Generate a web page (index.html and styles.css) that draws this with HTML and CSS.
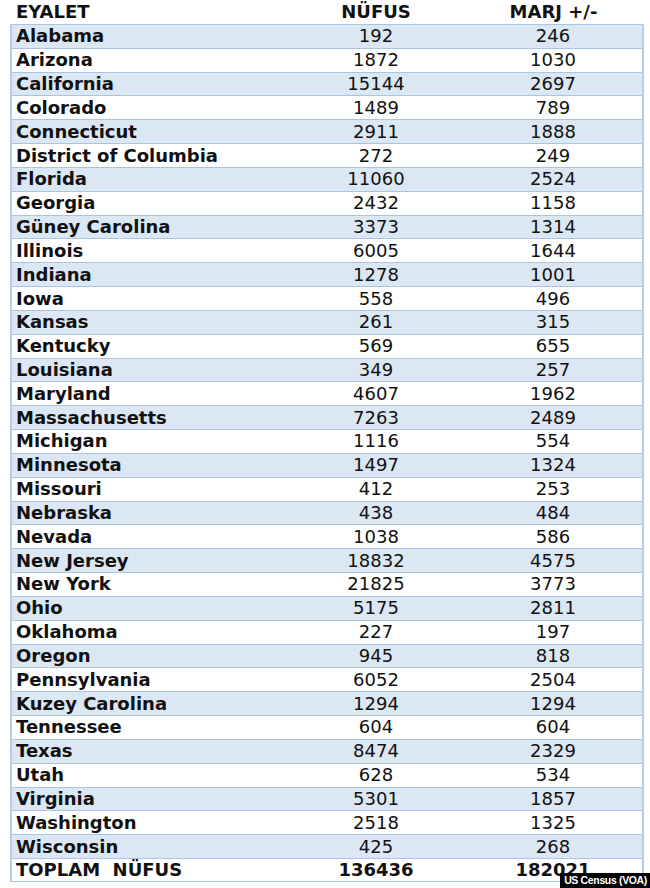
FILE: index.html
```html
<!DOCTYPE html>
<html lang="tr">
<head>
<meta charset="utf-8">
<title>Eyalet Nüfus</title>
<link rel="stylesheet" href="styles.css">
</head>
<body>
<div class="page">
<table class="data">
<colgroup><col class="c1"><col class="c2"><col class="c3"></colgroup>
<thead>
<tr class="head"><th class="name">EYALET</th><th>NÜFUS</th><th>MARJ +/-</th></tr>
</thead>
<tbody>
<tr class="alt"><td class="name">Alabama</td><td>192</td><td>246</td></tr>
<tr><td class="name">Arizona</td><td>1872</td><td>1030</td></tr>
<tr class="alt"><td class="name">California</td><td>15144</td><td>2697</td></tr>
<tr><td class="name">Colorado</td><td>1489</td><td>789</td></tr>
<tr class="alt"><td class="name">Connecticut</td><td>2911</td><td>1888</td></tr>
<tr><td class="name">District of Columbia</td><td>272</td><td>249</td></tr>
<tr class="alt"><td class="name">Florida</td><td>11060</td><td>2524</td></tr>
<tr><td class="name">Georgia</td><td>2432</td><td>1158</td></tr>
<tr class="alt"><td class="name">Güney Carolina</td><td>3373</td><td>1314</td></tr>
<tr><td class="name">Illinois</td><td>6005</td><td>1644</td></tr>
<tr class="alt"><td class="name">Indiana</td><td>1278</td><td>1001</td></tr>
<tr><td class="name">Iowa</td><td>558</td><td>496</td></tr>
<tr class="alt"><td class="name">Kansas</td><td>261</td><td>315</td></tr>
<tr><td class="name">Kentucky</td><td>569</td><td>655</td></tr>
<tr class="alt"><td class="name">Louisiana</td><td>349</td><td>257</td></tr>
<tr><td class="name">Maryland</td><td>4607</td><td>1962</td></tr>
<tr class="alt"><td class="name">Massachusetts</td><td>7263</td><td>2489</td></tr>
<tr><td class="name">Michigan</td><td>1116</td><td>554</td></tr>
<tr class="alt"><td class="name">Minnesota</td><td>1497</td><td>1324</td></tr>
<tr><td class="name">Missouri</td><td>412</td><td>253</td></tr>
<tr class="alt"><td class="name">Nebraska</td><td>438</td><td>484</td></tr>
<tr><td class="name">Nevada</td><td>1038</td><td>586</td></tr>
<tr class="alt"><td class="name">New Jersey</td><td>18832</td><td>4575</td></tr>
<tr><td class="name">New York</td><td>21825</td><td>3773</td></tr>
<tr class="alt"><td class="name">Ohio</td><td>5175</td><td>2811</td></tr>
<tr><td class="name">Oklahoma</td><td>227</td><td>197</td></tr>
<tr class="alt"><td class="name">Oregon</td><td>945</td><td>818</td></tr>
<tr><td class="name">Pennsylvania</td><td>6052</td><td>2504</td></tr>
<tr class="alt"><td class="name">Kuzey Carolina</td><td>1294</td><td>1294</td></tr>
<tr><td class="name">Tennessee</td><td>604</td><td>604</td></tr>
<tr class="alt"><td class="name">Texas</td><td>8474</td><td>2329</td></tr>
<tr><td class="name">Utah</td><td>628</td><td>534</td></tr>
<tr class="alt"><td class="name">Virginia</td><td>5301</td><td>1857</td></tr>
<tr><td class="name">Washington</td><td>2518</td><td>1325</td></tr>
<tr class="alt"><td class="name">Wisconsin</td><td>425</td><td>268</td></tr>
<tr class="total"><td class="name">TOPLAM&nbsp; NÜFUS</td><td>136436</td><td>182021</td></tr>
</tbody>
</table>
<div class="credit">US Census (VOA)</div>
</div>
</body>
</html>
```
FILE: styles.css
```css
html, body {
  margin: 0;
  padding: 0;
  background: #ffffff;
}
.page {
  position: relative;
  width: 650px;
  height: 888px;
  overflow: hidden;
}
.data {
  margin-left: 10px;
  width: 632px;
  border-collapse: collapse;
  table-layout: fixed;
  font-family: "DejaVu Sans", Verdana, sans-serif;
  font-size: 18px;
  color: #111111;
}
.c1 { width: 277px; }
.c2 { width: 176px; }
.c3 { width: 179px; }
.head th {
  height: 24px;
  padding: 0;
  font-weight: bold;
  text-align: center;
  line-height: 24px;
  vertical-align: middle;
}
.head th.name {
  text-align: left;
  padding-left: 5px;
}
tbody tr {
  height: 23.83px;
}
tbody td {
  padding: 0;
  line-height: 20px;
  text-align: center;
  border-top: 1px solid #aac5e3;
  border-bottom: 1px solid #aac5e3;
  vertical-align: middle;
}
tbody td:first-child { border-left: 2px solid #b6cde8; }
tbody td:last-child { border-right: 2px solid #b6cde8; }
tbody td.name {
  text-align: left;
  padding-left: 4px;
  font-weight: bold;
}
tr.alt td { background: #dce7f4; }
tr.total { height: 23px; }
tr.total td { font-weight: bold; background: #ffffff; }
.credit {
  position: absolute;
  right: 0;
  bottom: 0;
  background: #000000;
  color: #ffffff;
  font-family: "Liberation Sans", Arial, sans-serif;
  font-weight: bold;
  font-size: 10.5px;
  letter-spacing: -0.35px;
  line-height: 15px;
  padding: 0 3px 0 4px;
}
```
